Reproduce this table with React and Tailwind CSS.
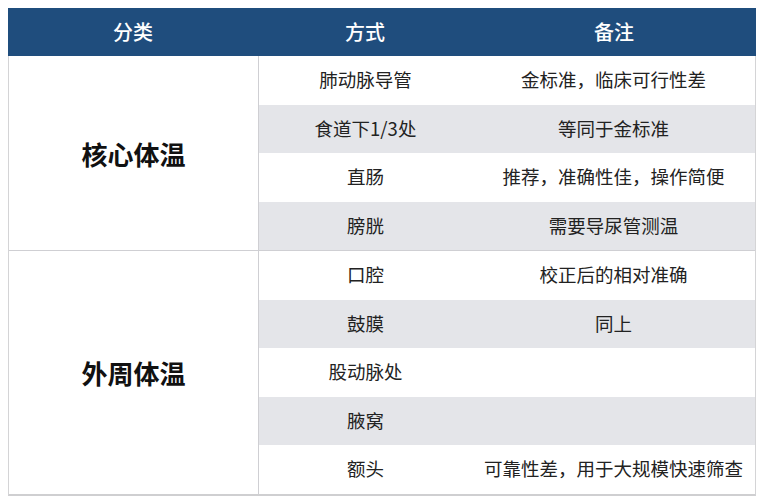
const font = { fontFamily: '"Noto Sans CJK SC", "Noto Sans", sans-serif' };

const GROUPS = [
  {
    name: '核心体温',
    rows: [
      ['肺动脉导管', '金标准，临床可行性差'],
      ['食道下1/3处', '等同于金标准'],
      ['直肠', '推荐，准确性佳，操作简便'],
      ['膀胱', '需要导尿管测温'],
    ],
  },
  {
    name: '外周体温',
    rows: [
      ['口腔', '校正后的相对准确'],
      ['鼓膜', '同上'],
      ['股动脉处', ''],
      ['腋窝', ''],
      ['额头', '可靠性差，用于大规模快速筛查'],
    ],
  },
];

export default function App() {
  let idx = 0;
  return (
    <div className="w-[766px] h-[500px] bg-white pt-[8px] pl-[8px]" style={font}>
      <div className="w-[748px]">
        <div className="flex h-[48px] bg-[#1f4d7d] text-white text-[20px] font-medium">
          <div className="w-[250px] flex items-center justify-center">分类</div>
          <div className="w-[214px] flex items-center justify-center">方式</div>
          <div className="flex-1 flex items-center justify-center">备注</div>
        </div>
        <div className="border-l border-r border-[#d4d4d6] border-b-2 border-b-[#cfcfd1]">
          {GROUPS.map((g, gi) => (
            <div key={g.name} className={`flex ${gi > 0 ? 'border-t border-[#cfcfd3]' : ''}`}>
              <div className="w-[250px] flex items-center justify-center text-[26px] font-bold text-[#111] border-r border-[#cfcfd3]">
                {g.name}
              </div>
              <div className="flex-1">
                {g.rows.map((r) => {
                  const gray = idx++ % 2 === 1;
                  return (
                    <div key={r[0]} className={`flex h-[48.5px] text-[18.5px] text-[#222] ${gray ? 'bg-[#e4e5e9]' : 'bg-white'}`}>
                      <div className="w-[213px] flex items-center justify-center">{r[0]}</div>
                      <div className="flex-1 flex items-center justify-center">{r[1]}</div>
                    </div>
                  );
                })}
              </div>
            </div>
          ))}
        </div>
      </div>
    </div>
  );
}
